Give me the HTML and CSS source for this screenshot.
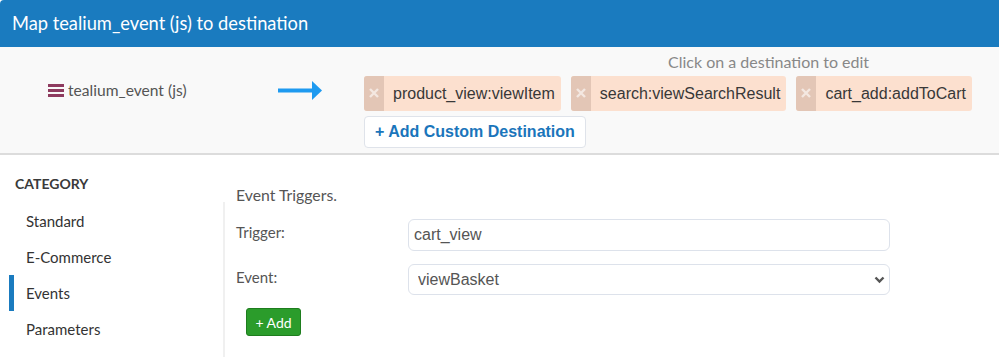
FILE: index.html
```html
<!DOCTYPE html>
<html>
<head>
    <meta charset="utf-8">
    <link rel="stylesheet" href="styles.css">
</head>
<body>
    <div class="modal-title">Map tealium_event (js) to destination</div>

    <div class="mapping">
        <div class="source">
            <svg class="var-icon" width="16" height="13" viewBox="0 0 16 13">
                <rect x="0" y="0" width="16" height="3"></rect>
                <rect x="0" y="5" width="16" height="3"></rect>
                <rect x="0" y="10" width="16" height="3"></rect>
            </svg>
            <span>tealium_event (js)</span>
        </div>
        <svg class="arrow" width="44" height="19" viewBox="0 0 44 19">
            <rect x="0" y="7.5" width="36" height="4"></rect>
            <polygon points="34,0 44,9.5 34,19"></polygon>
        </svg>
        <div class="destinations">
            <div class="hint">Click on a destination to edit</div>
            <div class="chips">
                <div class="chip">
                    <span class="chip-x"><svg width="10" height="10" viewBox="0 0 10 10"><path d="M1 1L9 9M9 1L1 9"></path></svg></span>
                    <span class="chip-text">product_view:viewItem</span>
                </div>
                <div class="chip">
                    <span class="chip-x"><svg width="10" height="10" viewBox="0 0 10 10"><path d="M1 1L9 9M9 1L1 9"></path></svg></span>
                    <span class="chip-text">search:viewSearchResult</span>
                </div>
                <div class="chip">
                    <span class="chip-x"><svg width="10" height="10" viewBox="0 0 10 10"><path d="M1 1L9 9M9 1L1 9"></path></svg></span>
                    <span class="chip-text">cart_add:addToCart</span>
                </div>
            </div>
            <button class="add-custom">+ Add Custom Destination</button>
        </div>
    </div>

    <div class="body">
        <div class="sidebar">
            <div class="cat-title">CATEGORY</div>
            <div class="cat-item">Standard</div>
            <div class="cat-item">E-Commerce</div>
            <div class="cat-item active">Events</div>
            <div class="cat-item">Parameters</div>
        </div>
        <div class="content">
            <div class="content-title">Event Triggers.</div>
            <div class="panel">
                <div class="form-row">
                    <label>Trigger:</label>
                    <input type="text" value="cart_view">
                </div>
                <div class="form-row">
                    <label>Event:</label>
                    <div class="select-wrap">
                        <select>
                            <option>viewBasket</option>
                        </select>
                        <svg class="chevron" width="11" height="8" viewBox="0 0 11 8">
                            <polyline points="1.5,1.5 5.5,5.5 9.5,1.5"></polyline>
                        </svg>
                    </div>
                </div>
                <button class="add-btn">+ Add</button>
            </div>
        </div>
    </div>
</body>
</html>
```

FILE: styles.css
```css
body{
    margin:0;
    background:white;
    font-family: Lato, "Open Sans", sans-serif;
    color:#444;
}
.modal-title{
    background-color:#1a7bbf;
    color:white;
    height:47px;
    line-height:46px;
    padding-left:12px;
    font-size:18.3px;
    border-top-left-radius:4px;
}
.mapping{
    background-color:#f9f9f9;
    border-bottom:2px solid #dcdcdc;
    display:flex;
    padding:6px 0 5px 48px;
}
.source{
    width:230px;
    margin-top:28px;
    display:flex;
    align-items:center;
    height:18px;
    font-size:15.6px;
    color:#555;
}
.var-icon{
    fill:#8e3b5f;
    margin-right:4px;
}
.arrow{
    fill:#1e9af0;
    margin-top:28px;
    margin-right:42px;
}
.hint{
    font-size:16px;
    color:#888;
    line-height:18px;
    padding-left:304px;
}
.chips{
    display:flex;
    gap:10px;
    margin-top:5px;
}
.chip{
    display:flex;
    height:35px;
    background-color:#fce0cf;
    border-radius:3px;
    overflow:hidden;
    font-family:"Liberation Sans", Arial, sans-serif;
}
.chip-x{
    width:20px;
    background-color:#e3c6b6;
    display:flex;
    align-items:center;
    justify-content:center;
}
.chip-x svg{
    stroke:#f4e8e1;
    stroke-width:2.4;
    margin-top:-2px;
}
.chip-text{
    font-size:16px;
    color:#383838;
    line-height:35px;
    padding:0 6px 0 9px;
}
.add-custom{
    display:block;
    margin-top:5px;
    height:32px;
    padding:0 10px;
    background:white;
    border:1px solid #dfe3ea;
    border-radius:4px;
    color:#1a75bb;
    font-family:"Liberation Sans", Arial, sans-serif;
    font-weight:bold;
    font-size:16px;
}
.body{
    display:flex;
}
.sidebar{
    width:223px;
    padding-top:20px;
}
.cat-title{
    padding-left:15px;
    font-size:14px;
    font-weight:bold;
    color:#3a3a3a;
    line-height:18px;
    margin-bottom:10px;
}
.cat-item{
    margin-left:9px;
    border-left:5px solid transparent;
    padding-left:12px;
    height:36px;
    line-height:36px;
    font-size:15px;
    color:#333;
}
.cat-item.active{
    border-left-color:#1a7bbf;
}
.content{
    flex:1;
}
.content-title{
    margin-top:33px;
    padding-left:13px;
    font-size:15.8px;
    line-height:14px;
    color:#555;
}
.panel{
    border-left:2px solid #f0f0f0;
    padding:17px 0 30px 11px;
}
.form-row{
    display:flex;
    align-items:flex-start;
    margin-bottom:13px;
}
.form-row label{
    width:172px;
    font-size:15px;
    color:#555;
    padding-top:4px;
}
.form-row input, .form-row select{
    box-sizing:border-box;
    width:482px;
    height:32px;
    border:1px solid #dde2eb;
    border-radius:6px;
    background:white;
    font-family:"Liberation Sans", Arial, sans-serif;
    font-size:16px;
    color:#555;
}
.form-row input{
    padding:0 5px;
}
.select-wrap{
    position:relative;
}
.form-row select{
    appearance:none;
    padding:0 9px;
    height:31px;
}
.chevron{
    position:absolute;
    right:5px;
    top:12px;
    fill:none;
    stroke:#555;
    stroke-width:2.4;
}
.add-btn{
    margin-left:10px;
    width:55px;
    height:28px;
    background-color:#2b9c2b;
    border:1px solid #1e7d1e;
    border-radius:3px;
    color:white;
    font-family:Lato, sans-serif;
    font-size:14px;
    padding:0;
}
```
